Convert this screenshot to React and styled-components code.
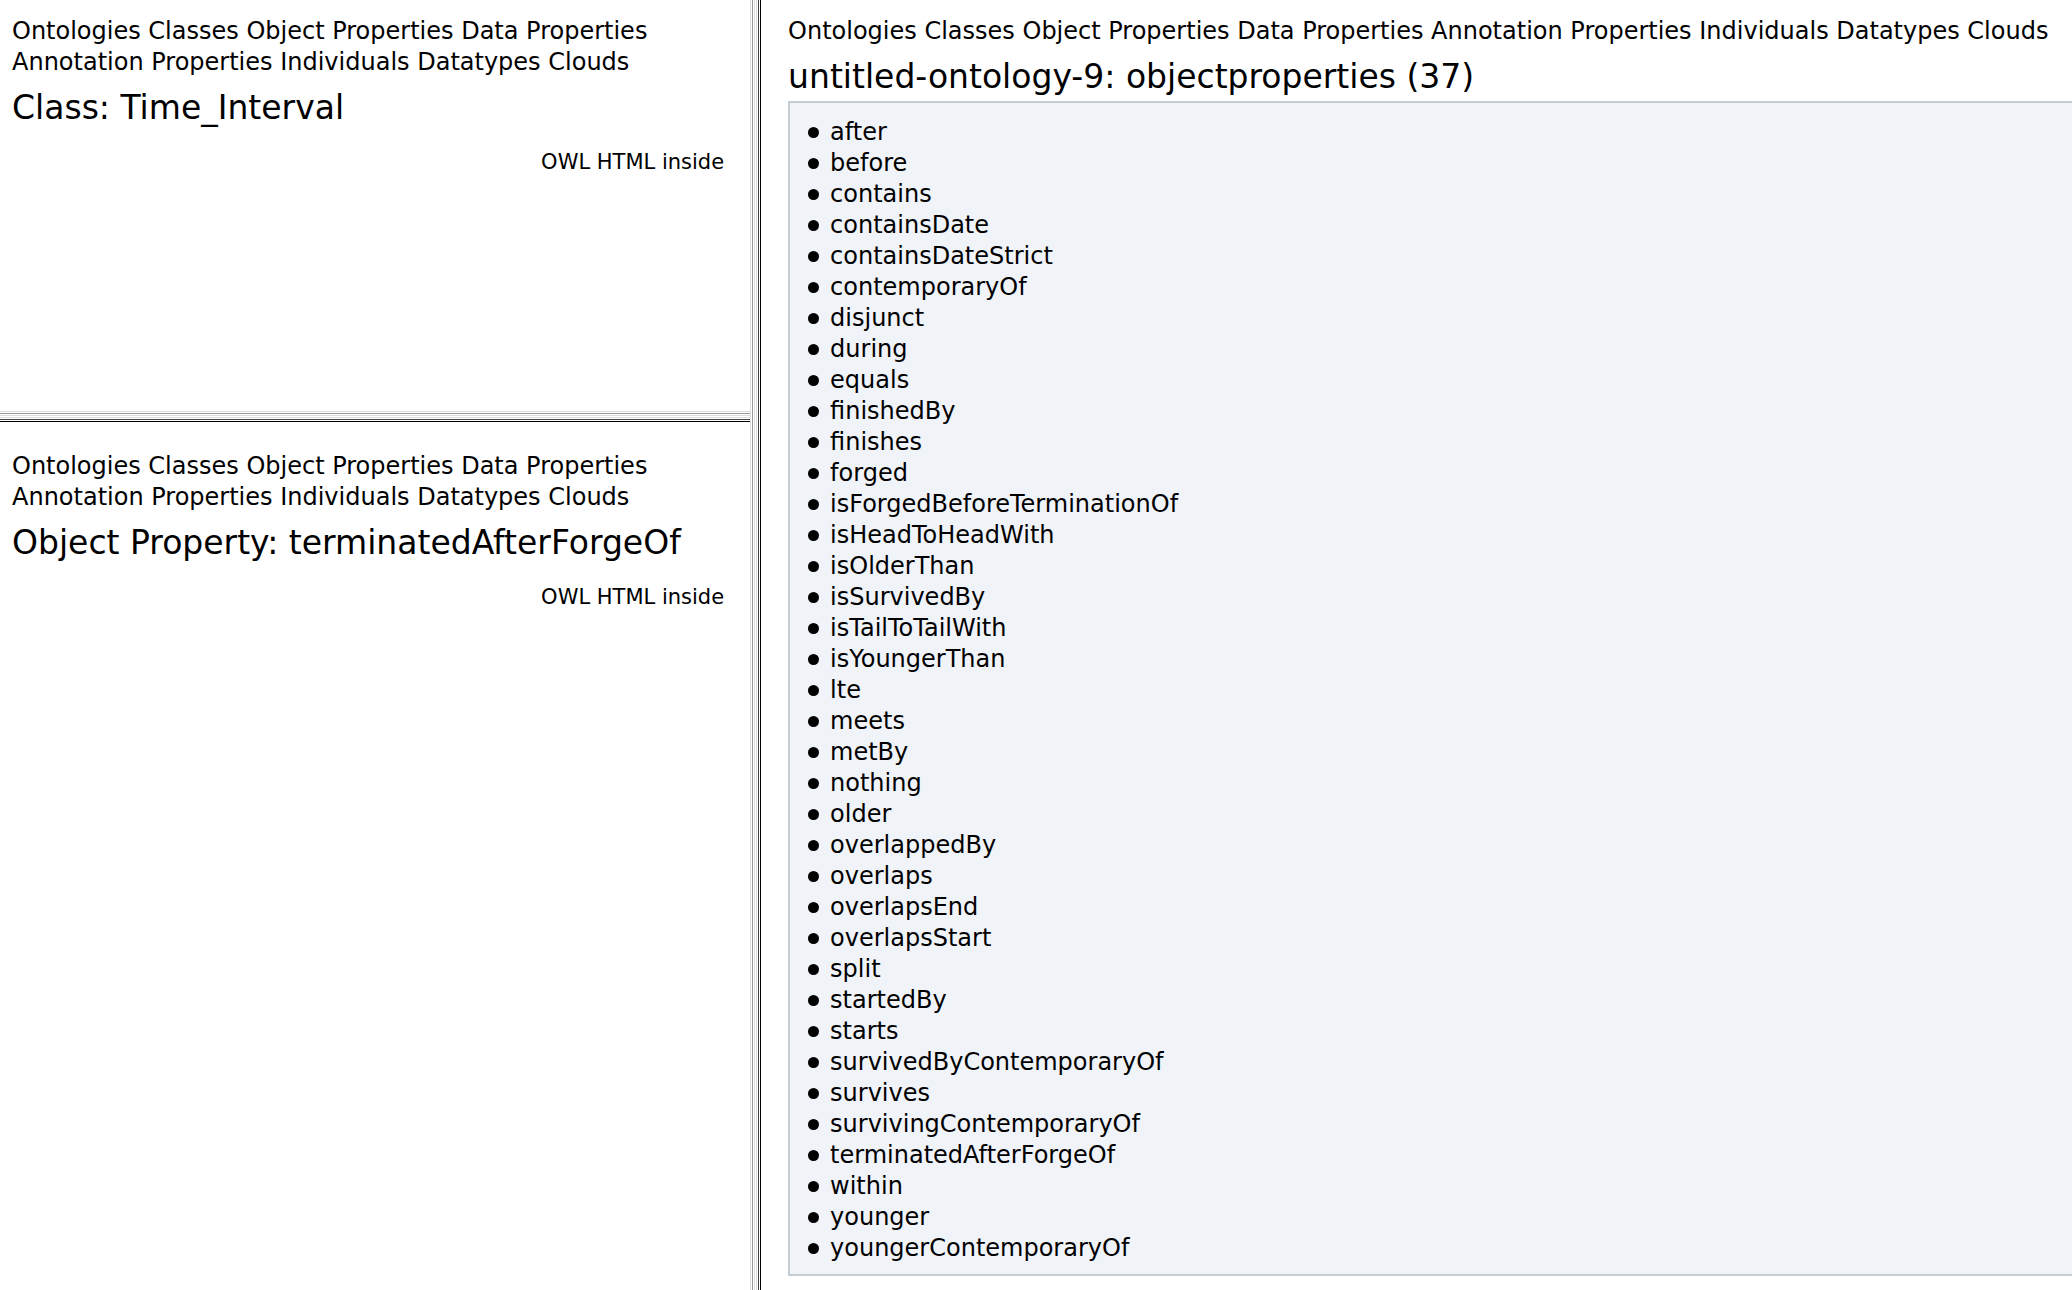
import React from "react";
import styled, { createGlobalStyle, css } from "styled-components";

const GlobalStyle = createGlobalStyle`
  *, *::before, *::after { box-sizing: border-box; }
  body {
    margin: 0;
    background: #fff;
    color: #000;
    font-family: Verdana, "DejaVu Sans", sans-serif;
    font-size: 24px;
    line-height: 31px;
  }
`;

const Frameset = styled.div`
  display: grid;
  grid-template-columns: 36.2% 11px minmax(0, 1fr);
  min-height: 100vh;
`;

const LeftFrames = styled.div`
  display: grid;
  grid-template-rows: 9fr 11px 19fr;
`;

const stripes = css`
  #ddd 0 1px, #fff 1px 2px,
  #999 2px 3px, #fff 3px 4px,
  #ddd 4px 5px, #fff 5px 6px,
  #ddd 6px 7px, #fff 7px 8px,
  #444 8px 9px, #fff 9px 10px,
  #000 10px 11px
`;

const Splitter = styled.div`
  background: linear-gradient(${(p) => (p.$vertical ? "to right" : "to bottom")}, ${stripes});
`;

const Frame = styled.section`
  padding: ${(p) => (p.$inset ? "29px" : "16px")} 12px 12px;
`;

const MainFrame = styled.main`
  padding: 16px 0 12px 27px;
`;

const Link = styled.a`
  color: inherit;
  text-decoration: none;
`;

const Title = styled.h1`
  margin: 12px 0 6px;
  font-size: 33px;
  line-height: 36px;
  font-weight: 400;
`;

const Credit = styled.p`
  margin: 22px 14px 0 0;
  font-size: 21px;
  line-height: 28px;
  text-align: right;
`;

const Box = styled.div`
  padding: 14px 0 10px;
  background: #f0f3f8;
  border: 2px solid #c6cdd2;
  border-right: 0;
`;

const List = styled.ul`
  margin: 0;
  padding: 0 0 0 18px;
  list-style: none;
`;

const Item = styled.li`
  display: flex;
  align-items: center;
  gap: 11px;

  &::before {
    content: "";
    flex: none;
    width: 11px;
    height: 11px;
    border-radius: 50%;
    background: #000;
  }
`;

const sections = [
  "Ontologies", "Classes", "Object Properties", "Data Properties",
  "Annotation Properties", "Individuals", "Datatypes", "Clouds",
];

const properties = [
  "after", "before", "contains", "containsDate", "containsDateStrict",
  "contemporaryOf", "disjunct", "during", "equals", "finishedBy", "finishes",
  "forged", "isForgedBeforeTerminationOf", "isHeadToHeadWith", "isOlderThan",
  "isSurvivedBy", "isTailToTailWith", "isYoungerThan", "lte", "meets", "metBy",
  "nothing", "older", "overlappedBy", "overlaps", "overlapsEnd",
  "overlapsStart", "split", "startedBy", "starts", "survivedByContemporaryOf",
  "survives", "survivingContemporaryOf", "terminatedAfterForgeOf", "within",
  "younger", "youngerContemporaryOf",
];

function SectionNav() {
  return (
    <nav>
      {sections.map((name) => (
        <React.Fragment key={name}>
          <Link href="#">{name}</Link>{" "}
        </React.Fragment>
      ))}
    </nav>
  );
}

function EntityFrame({ title, inset }) {
  return (
    <Frame $inset={inset}>
      <SectionNav />
      <Title>{title}</Title>
      <Credit><Link href="#">OWL HTML inside</Link></Credit>
    </Frame>
  );
}

export default function App() {
  return (
    <>
      <GlobalStyle />
      <Frameset>
        <LeftFrames>
          <EntityFrame title="Class: Time_Interval" />
          <Splitter />
          <EntityFrame title="Object Property: terminatedAfterForgeOf" inset />
        </LeftFrames>
        <Splitter $vertical />
        <MainFrame>
          <SectionNav />
          <Title>untitled-ontology-9: objectproperties (37)</Title>
          <Box>
            <List>
              {properties.map((name) => (
                <Item key={name}><Link href="#">{name}</Link></Item>
              ))}
            </List>
          </Box>
        </MainFrame>
      </Frameset>
    </>
  );
}
